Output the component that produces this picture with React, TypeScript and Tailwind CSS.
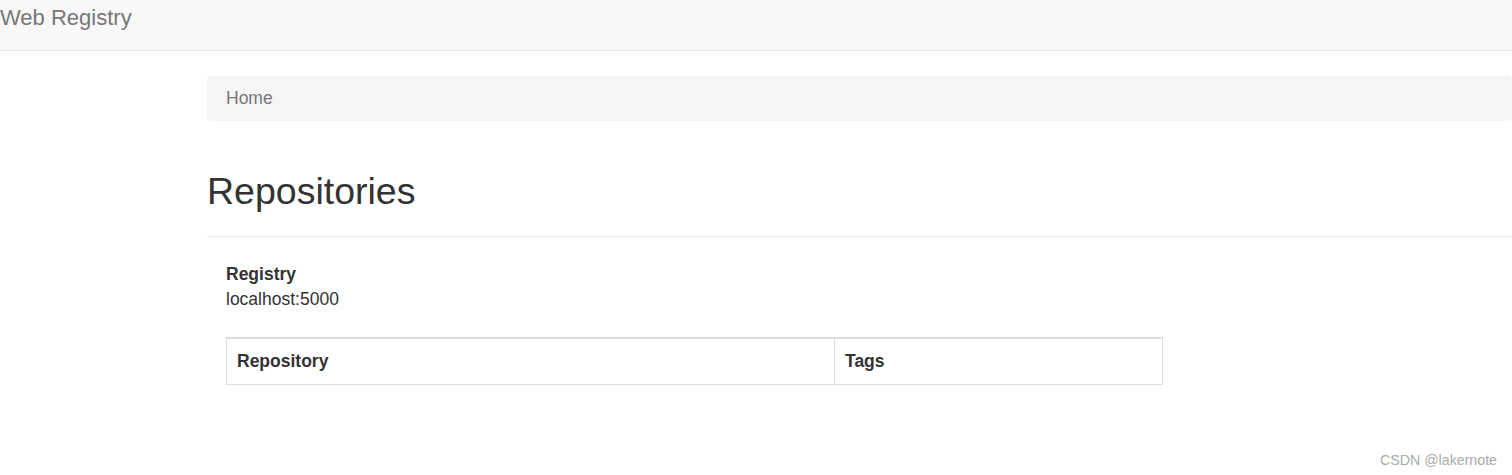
export default function App() {
  return (
    <div
      className="relative h-[475px] w-full overflow-hidden bg-white text-[#333]"
      style={{ fontFamily: '"Liberation Sans", Arial, sans-serif' }}
    >
      <nav className="h-[51px] border-b border-[#e7e7e7] bg-[#f8f8f8]">
        <div className="pt-[5px] text-[22px] leading-[25px] text-[#777]">Web Registry</div>
      </nav>

      <div className="ml-[207px]">
        <ol className="mt-[25px] flex h-[45px] items-center rounded-[5px] bg-[#f5f5f5] px-[19px] text-[17.5px] text-[#777]">
          <li>Home</li>
        </ol>

        <div className="mt-[50px] border-b border-[#eee] pb-[24px]">
          <h1 className="text-[37.5px] leading-[41px] font-normal">Repositories</h1>
        </div>

        <div className="mt-[25px] pl-[19px] text-[17.5px] leading-[25px]">
          <dl>
            <dt className="font-bold">Registry</dt>
            <dd>localhost:5000</dd>
          </dl>

          <div className="mt-[25px] flex w-[937px] border-x border-t-2 border-b border-[#ddd] font-bold">
            <div className="w-[608px] border-r border-[#ddd] p-[10px]">Repository</div>
            <div className="flex-1 p-[10px]">Tags</div>
          </div>
        </div>
      </div>

      <div className="absolute top-[450px] right-[15px] text-[14.2px] leading-[20px] text-[#aaa]">
        CSDN @lakernote
      </div>
    </div>
  )
}
